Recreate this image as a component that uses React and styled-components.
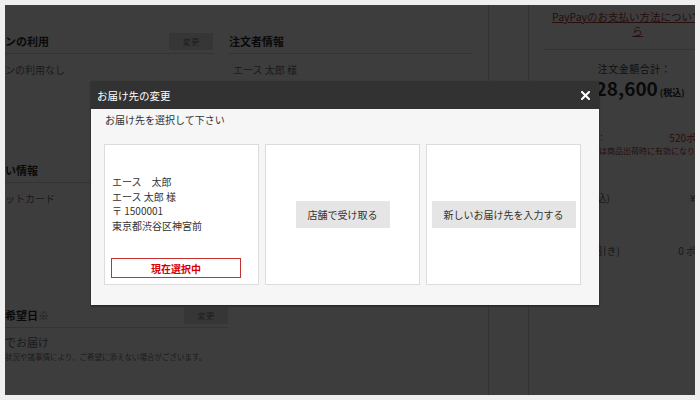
import React from "react";
import styled, { createGlobalStyle } from "styled-components";

const Global = createGlobalStyle`
  html, body { margin: 0; padding: 0; background: #efefef; }
  body { font-family: "Noto Sans CJK JP", "Noto Sans", sans-serif; }
  * { box-sizing: border-box; }
`;

const Frame = styled.div`
  position: relative;
  margin: 5px;
  width: 690px;
  height: 390px;
  overflow: hidden;
  background: #fff;
  font-family: "Noto Sans CJK JP", "Noto Sans", sans-serif;
`;

const Page = styled.div`
  display: flex;
  height: 100%;
`;

const Main = styled.div`
  width: 484px;
  flex: none;
  border-right: 1px solid #d6d6d6;
  padding-top: 24px;
`;

const Row = styled.div`
  display: flex;
  gap: 14px;
`;

const Section = styled.section`
  width: ${(p) => p.$w}px;
  margin-top: ${(p) => p.$mt || 0}px;
`;

const SectionHead = styled.div`
  display: flex;
  align-items: center;
  justify-content: space-between;
  height: 25px;
  border-bottom: 1px solid #d4d4d4;
  font-size: 11px;
  font-weight: 700;
  color: #2a2a2a;
`;

const Note = styled.span`
  font-weight: 400;
  color: #888;
`;

const SmallButton = styled.span`
  display: flex;
  align-items: center;
  justify-content: center;
  width: 44px;
  height: 17px;
  margin-right: ${(p) => p.$mr || 0}px;
  background: #e3e3e3;
  color: #777;
  font-size: 8.5px;
  font-weight: 400;
`;

const BodyText = styled.div`
  padding: ${(p) => p.$pt ?? 8}px 0 0 ${(p) => p.$pl || 0}px;
  font-size: ${(p) => p.$fs || 10}px;
  line-height: 16px;
  color: #6e6e6e;
`;

const TinyText = styled.div`
  font-size: 7.5px;
  line-height: 14px;
  color: #777;
`;

const Sidebar = styled.aside`
  flex: none;
  width: 212px;
  margin-left: 39px;
  border-left: 1px solid #d6d6d6;
  padding: 0 14px;
`;

const LinkBlock = styled.div`
  padding: 5px 0 11px 6px;
  border-bottom: 1px solid #d6d6d6;
  text-align: center;
  font-size: 10.5px;
  line-height: 14px;
  color: #a83a3a;
  text-decoration: underline;
`;

const TotalLabel = styled.div`
  padding-top: 12px;
  text-align: center;
  font-size: 10px;
  line-height: 14px;
  letter-spacing: 0.5px;
  color: #444;
`;

const TotalPrice = styled.div`
  margin-top: 1px;
  text-align: center;
  font-size: 19px;
  line-height: 22px;
  font-weight: 700;
  color: #2a2a2a;
  small {
    font-size: 9px;
    font-weight: 700;
    margin-left: 2px;
  }
`;

const SideRow = styled.div`
  display: flex;
  justify-content: space-between;
  align-items: center;
  margin-top: ${(p) => p.$mt || 0}px;
  font-size: ${(p) => p.$fs || 10}px;
  line-height: 14px;
  color: ${(p) => p.$color || "#666"};
`;

const RedNote = styled.div`
  font-size: 8px;
  line-height: 12px;
  color: #a83a3a;
  white-space: nowrap;
`;

const Overlay = styled.div`
  position: absolute;
  inset: 0;
  background: rgba(0, 0, 0, 0.76);
  display: flex;
  justify-content: center;
  align-items: flex-start;
  padding: 76px 10px 0 0;
`;

const Modal = styled.div`
  width: 508px;
  background: #f6f6f6;
  box-shadow: 0 1px 2px rgba(0, 0, 0, 0.5);
`;

const ModalHeader = styled.div`
  display: flex;
  align-items: center;
  justify-content: space-between;
  height: 28px;
  padding: 0 9px 0 6px;
  background: #323232;
  color: #fff;
  font-size: 10.5px;
`;

const CloseButton = styled.button`
  display: flex;
  padding: 0;
  border: 0;
  background: none;
  cursor: pointer;
`;

const ModalBody = styled.div`
  padding: 4px 18px 20px 13px;
`;

const Lead = styled.div`
  padding-left: 1px;
  font-size: 10px;
  line-height: 14px;
  color: #333;
  margin-bottom: 17px;
`;

const Cards = styled.div`
  display: grid;
  grid-template-columns: repeat(3, 155px);
  column-gap: 6px;
`;

const Card = styled.div`
  height: 141px;
  background: #fff;
  border: 1px solid #dcdcdc;
  display: flex;
  flex-direction: column;
  align-items: ${(p) => (p.$center ? "center" : "stretch")};
  justify-content: ${(p) => (p.$center ? "center" : "flex-start")};
  padding: ${(p) => (p.$center ? "0" : "30px 0 0 6px")};
`;

const Address = styled.div`
  padding-left: 1px;
  font-size: 10px;
  line-height: 14.5px;
  color: #333;
`;

const SelectedBadge = styled.div`
  margin-top: 25px;
  width: 130px;
  height: 20px;
  border: 1px solid #c53030;
  display: flex;
  align-items: center;
  justify-content: center;
  font-size: 10px;
  font-weight: 700;
  color: #d60000;
`;

const GrayButton = styled.button`
  height: 27px;
  padding: 0 12px;
  border: 0;
  background: #e5e5e5;
  font-family: inherit;
  font-size: 10px;
  color: #333;
  cursor: pointer;
`;

export default function App() {
  return (
    <>
      <Global />
      <Frame>
        <Page>
          <Main>
            <Row>
              <Section $w={210}>
                <SectionHead>
                  ンの利用
                  <SmallButton $mr={2}>変更</SmallButton>
                </SectionHead>
                <BodyText>ンの利用なし</BodyText>
              </Section>
              <Section $w={243}>
                <SectionHead>注文者情報</SectionHead>
                <BodyText $pl={4}>エース 太郎 様</BodyText>
              </Section>
            </Row>
            <Section $w={210} $mt={80}>
              <SectionHead>い情報</SectionHead>
              <BodyText>ットカード</BodyText>
            </Section>
            <Section $w={223} $mt={96}>
              <SectionHead>
                <span>
                  希望日<Note>※</Note>
                </span>
                <SmallButton>変更</SmallButton>
              </SectionHead>
              <BodyText $pt={6} $fs={11}>
                でお届け
              </BodyText>
              <TinyText>状況や諸事情により、ご希望に添えない場合がございます。</TinyText>
            </Section>
          </Main>
          <Sidebar>
            <LinkBlock>
              PayPayのお支払い方法についてはこ
              <br />ら
            </LinkBlock>
            <TotalLabel>注文金額合計：</TotalLabel>
            <TotalPrice>
              ¥28,600<small>(税込)</small>
            </TotalPrice>
            <SideRow $mt={27}>
              <span style={{ fontSize: 9 }}>獲得ポイント：</span>
              <span style={{ color: "#a83a3a" }}>520ポイント</span>
            </SideRow>
            <RedNote>※付与ポイントは商品出荷時に有効になります</RedNote>
            <SideRow $mt={34}>
              <span>商品合計(税込)</span>
              <span>¥28,600</span>
            </SideRow>
            <SideRow $mt={39}>
              <span>ポイント(値引き)</span>
              <span>0 ポイント</span>
            </SideRow>
          </Sidebar>
        </Page>
        <Overlay>
          <Modal role="dialog" aria-label="お届け先の変更">
            <ModalHeader>
              お届け先の変更
              <CloseButton aria-label="閉じる">
                <svg width="9" height="9" viewBox="0 0 9 9">
                  <path d="M1 1L8 8M8 1L1 8" stroke="#fff" strokeWidth="2" strokeLinecap="square" />
                </svg>
              </CloseButton>
            </ModalHeader>
            <ModalBody>
              <Lead>お届け先を選択して下さい</Lead>
              <Cards>
                <Card>
                  <Address>
                    エース　太郎
                    <br />
                    エース 太郎 様
                    <br />
                    〒 1500001
                    <br />
                    東京都渋谷区神宮前
                  </Address>
                  <SelectedBadge>現在選択中</SelectedBadge>
                </Card>
                <Card $center>
                  <GrayButton>店舗で受け取る</GrayButton>
                </Card>
                <Card $center>
                  <GrayButton>新しいお届け先を入力する</GrayButton>
                </Card>
              </Cards>
            </ModalBody>
          </Modal>
        </Overlay>
      </Frame>
    </>
  );
}
